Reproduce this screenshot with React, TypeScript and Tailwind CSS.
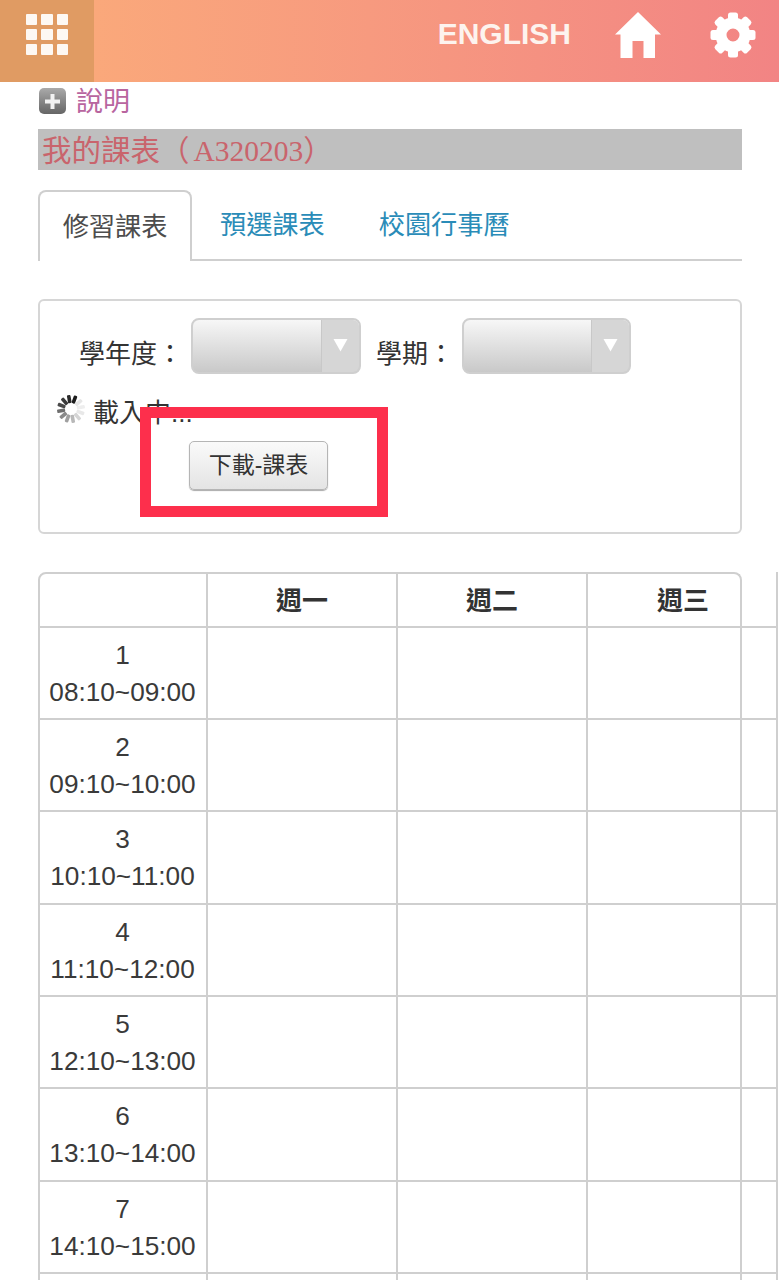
import React from "react";

const SANS = "font-['Liberation_Sans','Noto_Sans_CJK_TC',sans-serif]";

function SelectBox({ width }: { width: string }) {
  return (
    <div className={`${width} h-[56px] flex rounded-[8px] border-2 border-[#cfcfcf] bg-gradient-to-b from-[#f7f7f7] to-[#c9c9c9] overflow-hidden shrink-0`}>
      <div className="flex-1" />
      <div className="w-[38px] h-full bg-[#d6d6d6] border-l border-[#c8c8c8] flex justify-center pt-[18px]">
        <svg width="15" height="14" viewBox="0 0 15 14"><path d="M0.5 1h14L7.5 13.5z" fill="#fff" /></svg>
      </div>
    </div>
  );
}

function Spinner() {
  const shades = ["#1c1c1c", "#2a2a2a", "#3a3a3a", "#4a4a4a", "#6f6f6f", "#8a8a8a", "#a0a0a0", "#b8b8b8", "#d4d4d4", "#e8e8e8", "#eeeeee", "#e6e6e6"];
  return (
    <svg width="28" height="28" viewBox="0 0 28 28">
      {shades.map((c, i) => (
        <rect key={i} x="12.2" y="0" width="3.6" height="8" rx="1" fill={c} transform={`rotate(${20 - i * 30} 14 14)`} />
      ))}
    </svg>
  );
}

function HomeIcon() {
  return (
    <svg width="46" height="46" viewBox="0 0 46 46" className="shrink-0">
      <path d="M23 0 L46 22.5 L40 22.5 L40 46 L28.5 46 L28.5 29 L17.5 29 L17.5 46 L5.5 46 L5.5 22.5 L0 22.5 Z" fill="#fff" />
    </svg>
  );
}

function GearIcon() {
  const angles = [0, 45, 90, 135, 180, 225, 270, 315];
  return (
    <svg width="46" height="46" viewBox="0 0 46 46" className="shrink-0">
      <circle cx="23" cy="23" r="12" fill="none" stroke="#fff" strokeWidth="11" />
      {angles.map((a) => (
        <rect key={a} x="18" y="0.5" width="10" height="11" rx="2.5" fill="#fff" transform={`rotate(${a} 23 23)`} />
      ))}
    </svg>
  );
}

const periods = [
  ["1", "08:10~09:00", "h-[92px]"],
  ["2", "09:10~10:00", "h-[92px]"],
  ["3", "10:10~11:00", "h-[93px]"],
  ["4", "11:10~12:00", "h-[92px]"],
  ["5", "12:10~13:00", "h-[92px]"],
  ["6", "13:10~14:00", "h-[93px]"],
  ["7", "14:10~15:00", "h-[92px]"],
  ["", "", "h-[92px]"],
];

const cell = "border-r-2 border-b-2 border-[#cfcfcf]";

export default function App() {
  return (
    <div className={`${SANS} relative w-[779px] h-[1280px] overflow-hidden bg-white text-[#333]`}>
      <header className="h-[82px] flex items-stretch bg-gradient-to-r from-[#fbad79] to-[#f28484]">
        <div className="w-[94px] bg-[#e09b63] pl-[26px] pt-[14px]">
          <div className="w-[42px] h-[41px] grid grid-cols-3 grid-rows-3 gap-[4px]">
            {Array.from({ length: 9 }).map((_, i) => (
              <div key={i} className="bg-[#fdf8f3] rounded-[1px]" />
            ))}
          </div>
        </div>
        <div className="flex-1 flex items-start justify-end pt-[12px]">
          <span className="text-[#fdf3ee] font-bold text-[30px] leading-[44px] mr-[44px]">ENGLISH</span>
          <HomeIcon />
          <div className="w-[49px]" />
          <GearIcon />
          <div className="w-[23px]" />
        </div>
      </header>

      <main className="pl-[38px] w-[742px]">
        <div className="h-[47px] flex items-center pl-[1px] pb-[9px]">
          <div className="w-[27px] h-[26px] rounded-[5px] bg-gradient-to-b from-[#aaaaaa] to-[#666666] flex items-center justify-center">
            <svg width="15" height="15" viewBox="0 0 15 15"><path d="M5.5 0h4v5.5H15v4H9.5V15h-4V9.5H0v-4h5.5z" fill="#f2f2f2" /></svg>
          </div>
          <span className="ml-[10px] pt-[2px] text-[27px] leading-none text-[#b8659f]">說明</span>
        </div>

        <h1 className="h-[41px] bg-[#bfbfbf] pl-[4px] pt-[3px] flex items-center text-[29.5px] font-normal text-[#c9646c] font-['Liberation_Serif','Noto_Sans_CJK_SC',serif] whitespace-nowrap">
          <span>我的課表（</span>
          <span className="ml-[4px]">A320203</span>
          <span>）</span>
        </h1>

        <nav className="mt-[20px] h-[71px] flex border-b-2 border-[#cfcfcf] text-[26.2px]">
          <div className="w-[154px] h-[71px] rounded-t-[8px] border-2 border-b-0 border-[#cfcfcf] bg-white flex items-center justify-center text-[#4d4d4d] pt-[2px]">修習課表</div>
          <div className="ml-[28px] h-[69px] pt-[2px] flex items-center text-[#2a8cb8]">預選課表</div>
          <div className="ml-[54px] h-[69px] pt-[2px] flex items-center text-[#2a8cb8]">校園行事曆</div>
        </nav>

        <section className="relative mt-[38px] h-[235px] rounded-[6px] border-2 border-[#d6d6d6] pt-[17px]">
          <div className="flex items-center text-[26px] leading-none">
            <span className="ml-[39px] w-[112px] pt-[16px] whitespace-nowrap">學年度：</span>
            <SelectBox width="w-[170px]" />
            <span className="ml-[15px] w-[86px] pt-[16px] whitespace-nowrap">學期：</span>
            <SelectBox width="w-[169px]" />
          </div>
          <div className="h-[31px] flex items-start mt-[21px] ml-[17px] text-[26px] leading-none">
            <Spinner />
            <span className="ml-[8px] pt-[5px]">載入中...</span>
          </div>
          <button className="block ml-[149px] mt-[15px] w-[139px] h-[49px] rounded-[5px] border border-[#b5b5b5] shadow-[0_1px_1px_#aaa] bg-gradient-to-b from-[#fafafa] to-[#e4e4e4] text-[23px] leading-none text-[#333]">
            下載-課表
          </button>
          <div className="absolute left-[100px] top-[106px] w-[248px] h-[110px] border-[11px] border-[#fd2f4c]" />
        </section>

        <section className="relative mt-[38px] w-[704px]">
          <div className="w-[740px]">
            <div className="flex h-[56px]">
              <div className={`w-[170px] ${cell} border-l-2 border-t-2 rounded-tl-[8px]`} />
              {["週一", "週二"].map((d) => (
                <div key={d} className={`w-[190px] ${cell} border-t-2 pt-[2px] flex items-center justify-center font-bold text-[26px] text-[#333]`}>{d}</div>
              ))}
              <div className={`relative w-[190px] ${cell} pt-[4px] pl-[2px] flex items-center justify-center font-bold text-[26px] text-[#333]`}>
                週三
                <div className="absolute left-0 top-0 w-[154px] h-[12px] border-t-2 border-r-2 border-[#cfcfcf] rounded-tr-[8px]" />
              </div>
            </div>
            {periods.map(([n, t, h], i) => (
              <div key={i} className={`flex ${h}`}>
                <div className={`w-[170px] ${cell} border-l-2 flex flex-col items-center justify-center text-[26.2px] leading-[37px] text-[#3a3a3a] pr-[1px] pt-[1px]`}>
                  <span>{n}</span>
                  <span>{t}</span>
                </div>
                <div className={`w-[190px] ${cell}`} />
                <div className={`w-[190px] ${cell}`} />
                <div className={`w-[190px] ${cell}`} />
              </div>
            ))}
          </div>
          <div className="absolute left-[702px] top-[10px] bottom-0 w-[2px] bg-[#cfcfcf]" />
        </section>
      </main>
    </div>
  );
}
